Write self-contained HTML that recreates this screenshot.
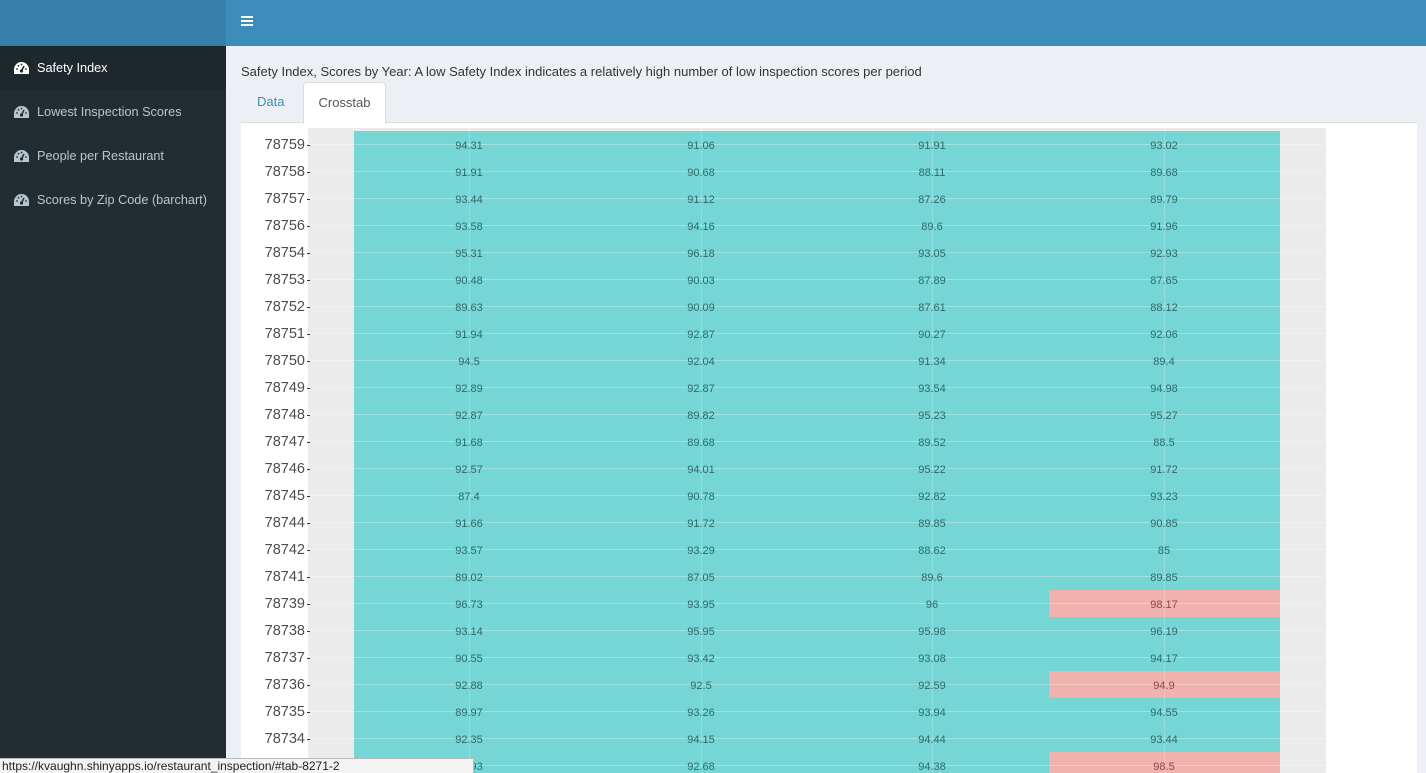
<!DOCTYPE html>
<html style="overflow:hidden;height:773px"><head><style>
*{margin:0;padding:0;box-sizing:border-box}
body{width:1426px;height:773px;overflow:hidden;background:#ecf0f5;font-family:"Liberation Sans",sans-serif;position:relative}
.wrap{position:absolute;left:0;top:0;width:1426px;height:773px;overflow:hidden}
.hdr{position:absolute;left:0;top:0;width:1426px;height:46px;background:#3c8dbc}
.logo{position:absolute;left:0;top:0;width:226px;height:46px;background:#367fa9}
.burger{position:absolute;left:241px;top:16px;width:12px}
.burger i{display:block;height:2px;background:#fff;margin-bottom:2px}
.side{position:absolute;left:0;top:46px;width:226px;height:727px;background:#222d32}
.item{height:44px;display:flex;align-items:center;padding-left:14px;color:#b8c7ce;font-size:12.7px}
.item.act{background:#1e282c;color:#fff}
.item svg{margin-right:8px}
.title{position:absolute;left:241px;top:64px;font-size:13px;color:#333}
.tabs{position:absolute;left:241px;top:82px;height:41px}
.tab{position:absolute;top:0;height:41px;line-height:40px;font-size:13px}
.panel{position:absolute;left:241px;top:122px;width:1176px;height:660px;background:#fff;border-top:1px solid #ddd}
.grey{position:absolute;left:308px;top:128px;width:1018px;height:650px;background:#ebebeb}
.teal{position:absolute;left:354px;top:131px;width:926px;height:650px;background:#76d6d6}
.pink{position:absolute;left:1049px;width:231px;height:27px;background:#f1b1ac}
.hl{position:absolute;left:308px;width:1018px;height:1px;background:rgba(255,255,255,.3)}
.hg{position:absolute;width:46px;height:1px;background:#fff}
.vl{position:absolute;top:128px;width:1px;height:650px;background:rgba(255,255,255,.2)}
.row{position:absolute;left:241px;width:1100px;height:27px;font-size:11px;color:#2f6868}
.row span{position:absolute;top:9px;width:120px;text-align:center}
.row .z{left:0;width:64px;text-align:right;top:6px;font-size:14.5px;color:#4d4d4d}
.row .z:after{content:"";position:absolute;right:-5px;top:8px;width:3px;height:1px;background:#333}
.row .a{left:168px}.row .b{left:400px}.row .c{left:631px}.row .d{left:863px}
.row .p{color:#8a4848}
.status{position:absolute;left:0;top:758px;width:474px;height:15px;background:#f3f3f3;border:1px solid #bbb;border-left:none;border-bottom:none;font-size:12px;line-height:14px;padding-left:2px;color:#222}
</style></head><body><div class="wrap">
<div class="hdr"></div><div class="logo"></div>
<div class="burger"><i></i><i></i><i></i></div>
<div class="side">
<div class="item act"><svg width="15" height="12" viewBox="0 0 15 12"><path d="M7.5 0A7.5 7.5 0 0 0 0 7.5V12h15V7.5A7.5 7.5 0 0 0 7.5 0z" fill="#fff"/><circle cx="7.5" cy="9" r="1.6" fill="#1e282c"/><path d="M7.5 9L10 4" stroke="#1e282c" stroke-width="1.5"/><circle cx="3" cy="7" r=".9" fill="#1e282c"/><circle cx="4.5" cy="3.8" r=".9" fill="#1e282c"/><circle cx="7.5" cy="2.5" r=".9" fill="#1e282c"/><circle cx="12" cy="7" r=".9" fill="#1e282c"/></svg>Safety Index</div>
<div class="item"><svg width="15" height="12" viewBox="0 0 15 12"><path d="M7.5 0A7.5 7.5 0 0 0 0 7.5V12h15V7.5A7.5 7.5 0 0 0 7.5 0z" fill="#b8c7ce"/><circle cx="7.5" cy="9" r="1.6" fill="#222d32"/><path d="M7.5 9L10 4" stroke="#222d32" stroke-width="1.5"/><circle cx="3" cy="7" r=".9" fill="#222d32"/><circle cx="4.5" cy="3.8" r=".9" fill="#222d32"/><circle cx="7.5" cy="2.5" r=".9" fill="#222d32"/><circle cx="12" cy="7" r=".9" fill="#222d32"/></svg>Lowest Inspection Scores</div>
<div class="item"><svg width="15" height="12" viewBox="0 0 15 12"><path d="M7.5 0A7.5 7.5 0 0 0 0 7.5V12h15V7.5A7.5 7.5 0 0 0 7.5 0z" fill="#b8c7ce"/><circle cx="7.5" cy="9" r="1.6" fill="#222d32"/><path d="M7.5 9L10 4" stroke="#222d32" stroke-width="1.5"/><circle cx="3" cy="7" r=".9" fill="#222d32"/><circle cx="4.5" cy="3.8" r=".9" fill="#222d32"/><circle cx="7.5" cy="2.5" r=".9" fill="#222d32"/><circle cx="12" cy="7" r=".9" fill="#222d32"/></svg>People per Restaurant</div>
<div class="item"><svg width="15" height="12" viewBox="0 0 15 12"><path d="M7.5 0A7.5 7.5 0 0 0 0 7.5V12h15V7.5A7.5 7.5 0 0 0 7.5 0z" fill="#b8c7ce"/><circle cx="7.5" cy="9" r="1.6" fill="#222d32"/><path d="M7.5 9L10 4" stroke="#222d32" stroke-width="1.5"/><circle cx="3" cy="7" r=".9" fill="#222d32"/><circle cx="4.5" cy="3.8" r=".9" fill="#222d32"/><circle cx="7.5" cy="2.5" r=".9" fill="#222d32"/><circle cx="12" cy="7" r=".9" fill="#222d32"/></svg>Scores by Zip Code (barchart)</div>
</div>
<div class="title">Safety Index, Scores by Year: A low Safety Index indicates a relatively high number of low inspection scores per period</div>
<div class="panel"></div>
<div class="tabs">
<div class="tab" style="left:16px;color:#3c8dbc">Data</div>
<div class="tab" style="left:62px;width:83px;background:#fff;border:1px solid #ddd;border-bottom:none;border-radius:4px 4px 0 0;text-align:center;color:#555;height:42px">Crosstab</div>
</div>
<div class="grey"></div>
<div class="teal"></div>
<div class="pink" style="top:590px"></div>
<div class="pink" style="top:671px"></div>
<div class="pink" style="top:752px"></div>
<div class="vl" style="left:469px"></div><div class="vl" style="left:701px"></div><div class="vl" style="left:932px"></div><div class="vl" style="left:1164px"></div>
<div class="hl" style="top:144px"></div><div class="hl" style="top:171px"></div><div class="hl" style="top:198px"></div><div class="hl" style="top:225px"></div><div class="hl" style="top:252px"></div><div class="hl" style="top:279px"></div><div class="hl" style="top:306px"></div><div class="hl" style="top:333px"></div><div class="hl" style="top:360px"></div><div class="hl" style="top:387px"></div><div class="hl" style="top:414px"></div><div class="hl" style="top:441px"></div><div class="hl" style="top:468px"></div><div class="hl" style="top:495px"></div><div class="hl" style="top:522px"></div><div class="hl" style="top:549px"></div><div class="hl" style="top:576px"></div><div class="hl" style="top:603px"></div><div class="hl" style="top:630px"></div><div class="hl" style="top:657px"></div><div class="hl" style="top:684px"></div><div class="hl" style="top:711px"></div><div class="hl" style="top:738px"></div><div class="hl" style="top:765px"></div>
<div class="row" style="top:131px"><span class="z">78759</span><span class="a">94.31</span><span class="b">91.06</span><span class="c">91.91</span><span class="d">93.02</span></div>
<div class="row" style="top:158px"><span class="z">78758</span><span class="a">91.91</span><span class="b">90.68</span><span class="c">88.11</span><span class="d">89.68</span></div>
<div class="row" style="top:185px"><span class="z">78757</span><span class="a">93.44</span><span class="b">91.12</span><span class="c">87.26</span><span class="d">89.79</span></div>
<div class="row" style="top:212px"><span class="z">78756</span><span class="a">93.58</span><span class="b">94.16</span><span class="c">89.6</span><span class="d">91.96</span></div>
<div class="row" style="top:239px"><span class="z">78754</span><span class="a">95.31</span><span class="b">96.18</span><span class="c">93.05</span><span class="d">92.93</span></div>
<div class="row" style="top:266px"><span class="z">78753</span><span class="a">90.48</span><span class="b">90.03</span><span class="c">87.89</span><span class="d">87.65</span></div>
<div class="row" style="top:293px"><span class="z">78752</span><span class="a">89.63</span><span class="b">90.09</span><span class="c">87.61</span><span class="d">88.12</span></div>
<div class="row" style="top:320px"><span class="z">78751</span><span class="a">91.94</span><span class="b">92.87</span><span class="c">90.27</span><span class="d">92.06</span></div>
<div class="row" style="top:347px"><span class="z">78750</span><span class="a">94.5</span><span class="b">92.04</span><span class="c">91.34</span><span class="d">89.4</span></div>
<div class="row" style="top:374px"><span class="z">78749</span><span class="a">92.89</span><span class="b">92.87</span><span class="c">93.54</span><span class="d">94.98</span></div>
<div class="row" style="top:401px"><span class="z">78748</span><span class="a">92.87</span><span class="b">89.82</span><span class="c">95.23</span><span class="d">95.27</span></div>
<div class="row" style="top:428px"><span class="z">78747</span><span class="a">91.68</span><span class="b">89.68</span><span class="c">89.52</span><span class="d">88.5</span></div>
<div class="row" style="top:455px"><span class="z">78746</span><span class="a">92.57</span><span class="b">94.01</span><span class="c">95.22</span><span class="d">91.72</span></div>
<div class="row" style="top:482px"><span class="z">78745</span><span class="a">87.4</span><span class="b">90.78</span><span class="c">92.82</span><span class="d">93.23</span></div>
<div class="row" style="top:509px"><span class="z">78744</span><span class="a">91.66</span><span class="b">91.72</span><span class="c">89.85</span><span class="d">90.85</span></div>
<div class="row" style="top:536px"><span class="z">78742</span><span class="a">93.57</span><span class="b">93.29</span><span class="c">88.62</span><span class="d">85</span></div>
<div class="row" style="top:563px"><span class="z">78741</span><span class="a">89.02</span><span class="b">87.05</span><span class="c">89.6</span><span class="d">89.85</span></div>
<div class="row" style="top:590px"><span class="z">78739</span><span class="a">96.73</span><span class="b">93.95</span><span class="c">96</span><span class="d p">98.17</span></div>
<div class="row" style="top:617px"><span class="z">78738</span><span class="a">93.14</span><span class="b">95.95</span><span class="c">95.98</span><span class="d">96.19</span></div>
<div class="row" style="top:644px"><span class="z">78737</span><span class="a">90.55</span><span class="b">93.42</span><span class="c">93.08</span><span class="d">94.17</span></div>
<div class="row" style="top:671px"><span class="z">78736</span><span class="a">92.88</span><span class="b">92.5</span><span class="c">92.59</span><span class="d p">94.9</span></div>
<div class="row" style="top:698px"><span class="z">78735</span><span class="a">89.97</span><span class="b">93.26</span><span class="c">93.94</span><span class="d">94.55</span></div>
<div class="row" style="top:725px"><span class="z">78734</span><span class="a">92.35</span><span class="b">94.15</span><span class="c">94.44</span><span class="d">93.44</span></div>
<div class="row" style="top:752px"><span class="z">78733</span><span class="a">92.93</span><span class="b">92.68</span><span class="c">94.38</span><span class="d p">98.5</span></div>
<div class="status">https://kvaughn.shinyapps.io/restaurant_inspection/#tab-8271-2</div>
</div></body></html>
